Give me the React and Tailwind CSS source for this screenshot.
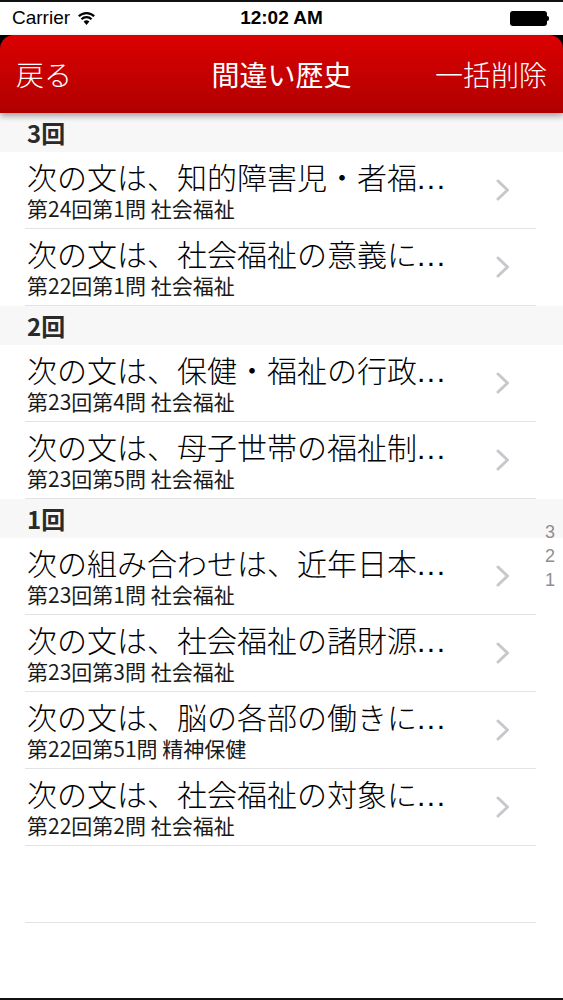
const sections = [
  {
    title: "3回",
    rows: [
      { q: "次の文は、知的障害児・者福", sub: "第24回第1問 社会福祉" },
      { q: "次の文は、社会福祉の意義に", sub: "第22回第1問 社会福祉" },
    ],
  },
  {
    title: "2回",
    rows: [
      { q: "次の文は、保健・福祉の行政", sub: "第23回第4問 社会福祉" },
      { q: "次の文は、母子世帯の福祉制", sub: "第23回第5問 社会福祉" },
    ],
  },
  {
    title: "1回",
    rows: [
      { q: "次の組み合わせは、近年日本", sub: "第23回第1問 社会福祉" },
      { q: "次の文は、社会福祉の諸財源", sub: "第23回第3問 社会福祉" },
      { q: "次の文は、脳の各部の働きに", sub: "第22回第51問 精神保健" },
      { q: "次の文は、社会福祉の対象に", sub: "第22回第2問 社会福祉" },
    ],
  },
];

const jp = { fontFamily: '"Noto Sans CJK JP", "Liberation Sans", sans-serif' };
const latin = { fontFamily: '"Liberation Sans", "Noto Sans CJK JP", sans-serif' };

function StatusBar() {
  return (
    <div className="relative flex h-[35px] shrink-0 items-center border-t-2 border-[#111] bg-white px-3" style={latin}>
      <span className="text-[19px] text-black">Carrier</span>
      <svg className="ml-[7px]" width="19" height="15" viewBox="0 0 19 15">
        <path d="M9.5 14 L6.6 10.6 A4.2 4.2 0 0 1 12.4 10.6 Z" fill="#000" />
        <path d="M4.5 8.2 A7 7 0 0 1 14.5 8.2" stroke="#000" strokeWidth="2.2" fill="none" />
        <path d="M1.8 5.3 A10.8 10.8 0 0 1 17.2 5.3" stroke="#000" strokeWidth="2.2" fill="none" />
      </svg>
      <span className="absolute left-1/2 -translate-x-1/2 text-[19px] font-semibold text-black">12:02 AM</span>
      <div className="ml-auto mr-[2px] flex items-center">
        <div className="h-[15px] w-[37px] rounded-[3px] bg-black" />
        <div className="h-[5px] w-[2px] rounded-r-sm bg-black" />
      </div>
    </div>
  );
}

function NavBar() {
  return (
    <div className="relative z-10 shrink-0 bg-black">
      <div
        className="flex h-[78px] items-center justify-between rounded-t-[14px] bg-gradient-to-b from-[#dc0000] to-[#b00000] px-4 text-[28px] font-light text-white shadow-[0_3px_6px_rgba(0,0,0,0.35)]"
        style={jp}
      >
        <span>戻る</span>
        <span className="absolute left-1/2 -translate-x-1/2 font-normal">間違い歴史</span>
        <span>一括削除</span>
      </div>
    </div>
  );
}

function Chevron() {
  return (
    <svg width="14" height="22" viewBox="0 0 14 22" className="shrink-0">
      <path d="M2 2 L11.5 11 L2 20" stroke="#c7c7cc" strokeWidth="3" fill="none" strokeLinecap="round" strokeLinejoin="round" />
    </svg>
  );
}

function Row({ q, sub }) {
  return (
    <div className="flex h-[77px] items-center pl-[25px] pr-[27px]">
      <div className="flex h-full flex-1 items-center border-b border-[#e3e3e6] pl-[2px] pr-[26px]">
        <div className="flex-1">
          <div className="flex items-baseline whitespace-nowrap text-[30px] font-light leading-[34px] text-black">
            {q}
            <span className="tracking-[1.5px]" style={latin}>...</span>
          </div>
          <div className="whitespace-nowrap text-[21px] leading-[25px] text-[#1a1a1a]">{sub}</div>
        </div>
        <Chevron />
      </div>
    </div>
  );
}

export default function App() {
  return (
    <div className="flex h-[1000px] w-[563px] flex-col overflow-hidden bg-white">
      <StatusBar />
      <NavBar />
      <div className="relative flex-1 border-b-2 border-[#111]" style={jp}>
        {sections.map((s) => (
          <div key={s.title}>
            <div className="flex h-[39px] items-center bg-[#f7f7f7] pl-[27px] text-[24px] font-bold text-[#2a2a2a]">
              {s.title}
            </div>
            {s.rows.map((r) => (
              <Row key={r.sub + r.q} {...r} />
            ))}
          </div>
        ))}
        <div className="h-[77px] pl-[25px] pr-[27px]">
          <div className="h-full border-b border-[#e3e3e6]" />
        </div>
        <div
          className="absolute right-[8px] top-1/2 flex -translate-y-1/2 flex-col items-center text-[18px] leading-[24px] text-[#8e8e93]"
          style={latin}
        >
          <span>3</span>
          <span>2</span>
          <span>1</span>
        </div>
      </div>
    </div>
  );
}
